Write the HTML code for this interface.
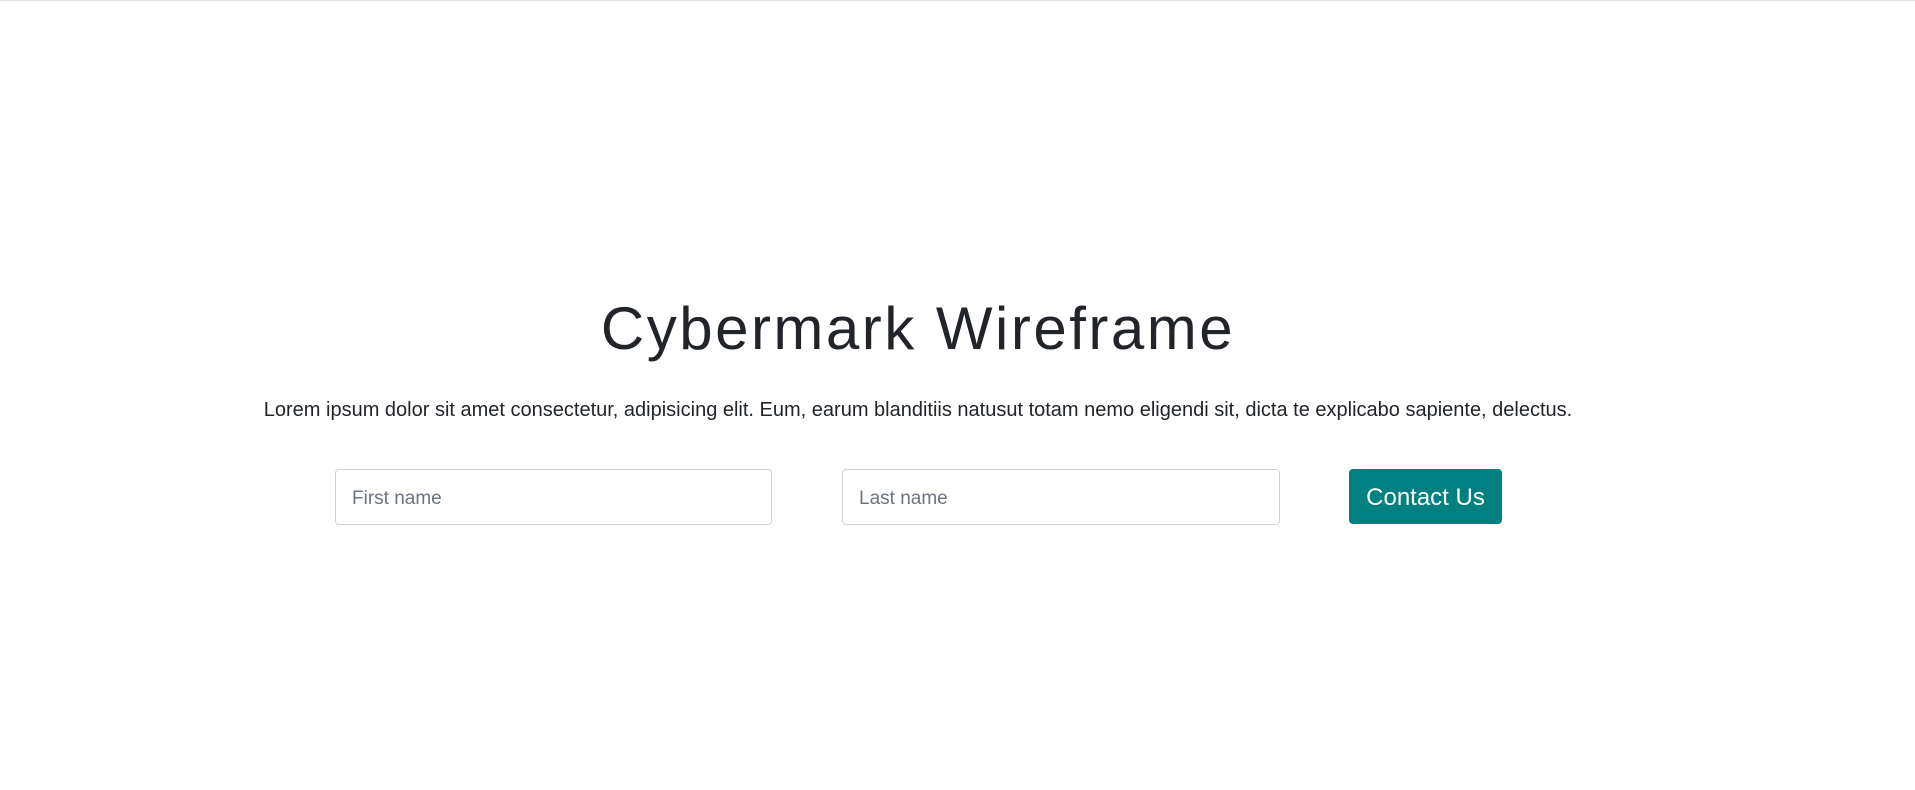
<!DOCTYPE html>
<html><head><style>
html,body{margin:0;padding:0;background:#fff;width:1915px;height:790px;overflow:hidden;font-family:"Liberation Sans",sans-serif;color:#212529}
.top{position:absolute;left:0;top:0;width:1915px;height:1px;background:#dee2e6}
h1{position:absolute;left:0;width:1836px;top:294px;margin:0;text-align:center;font-weight:400;font-size:60px;line-height:70px;letter-spacing:2.5px;white-space:nowrap}
p{position:absolute;left:0;width:1836px;top:397px;margin:0;text-align:center;font-size:20px;line-height:26px;white-space:nowrap}
.in{position:absolute;top:469px;height:56px;border:1px solid #ced4da;border-radius:4px;box-sizing:border-box;color:#6c757d;font-size:19px;line-height:58px;padding-left:16px}
.btn{position:absolute;left:1349px;top:469px;width:153px;height:55px;background:#008080;border-radius:4px;color:#fff;font-size:24px;line-height:57px;text-align:center}
</style></head><body>
<div class="top"></div>
<h1>Cybermark Wireframe</h1>
<p>Lorem ipsum dolor sit amet consectetur, adipisicing elit. Eum, earum blanditiis natusut totam nemo eligendi sit, dicta te explicabo sapiente, delectus.</p>
<div class="in" style="left:335px;width:437px">First name</div>
<div class="in" style="left:842px;width:438px">Last name</div>
<div class="btn">Contact Us</div>
</body></html>
